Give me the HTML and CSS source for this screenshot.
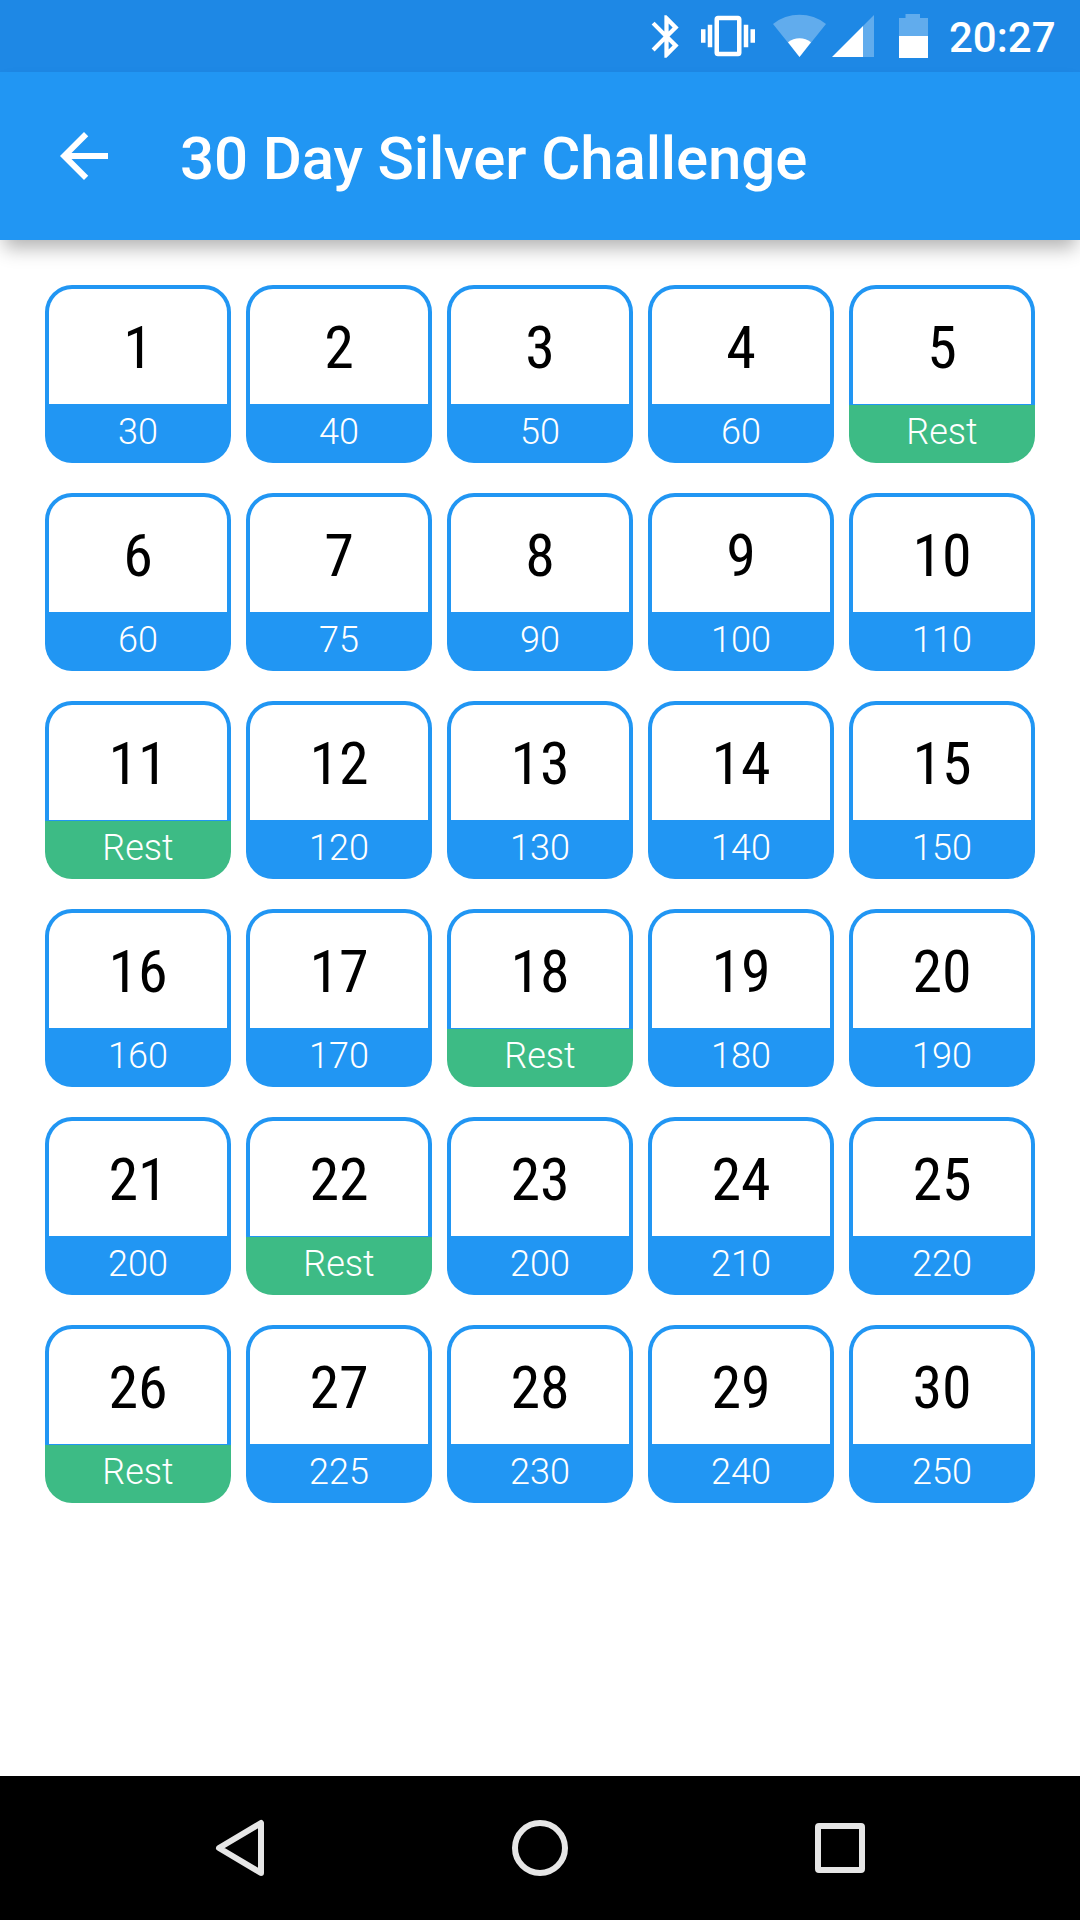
FILE: index.html
```html
<!DOCTYPE html>
<html lang="en">
<head>
    <meta charset="UTF-8">
    <meta name="viewport" content="width=device-width, initial-scale=1.0">
    <title>30 Day Silver Challenge</title>
    <link rel="stylesheet" href="styles.css">
</head>
<body>
    <div class="status-bar">
        <svg class="icon-bluetooth" viewBox="0 0 24 24"><path d="M17.71 7.71L12 2h-1v7.59L6.41 5 5 6.41 10.59 12 5 17.59 6.41 19 11 14.41V22h1l5.71-5.71-4.3-4.29 4.3-4.29zM13 5.83l1.88 1.88L13 9.59V5.83zm1.88 10.46L13 18.17v-3.76l1.88 1.88z"/></svg>
        <svg class="icon-vibrate" viewBox="0 0 24 24"><path d="M0 15h2V9H0v6zm3 2h2V7H3v10zm19-8v6h2V9h-2zm-3 8h2V7h-2v10zM16.5 3h-9C6.67 3 6 3.67 6 4.5v15c0 .83.67 1.5 1.5 1.5h9c.83 0 1.5-.67 1.5-1.5v-15c0-.83-.67-1.5-1.5-1.5zM16 19H8V5h8v14z"/></svg>
        <svg class="icon-wifi" viewBox="0 0 53 44">
            <path class="dim" d="M26.5 43L0 10A42.5 42.5 0 0 1 53 10z"/>
            <path d="M26.5 43L15 28.2A19 19 0 0 1 38 28.2z"/>
        </svg>
        <svg class="icon-signal" viewBox="0 0 42 44">
            <path class="dim" d="M31 12L42 1v42H31z"/>
            <path d="M0 43L31 12v31z"/>
        </svg>
        <svg class="icon-battery" viewBox="0 0 29 44">
            <path class="dim" d="M0 4h6.500V0h14.500v4H29v18H0z"/>
            <path d="M0 22h29v22H0z"/>
        </svg>
        <span class="clock">20:27</span>
    </div>

    <div class="toolbar">
        <svg class="icon-back" viewBox="0 0 24 24"><path d="M20 11H7.830l5.590-5.590L12 4l-8 8 8 8 1.410-1.410L7.830 13H20v-2z"/></svg>
        <h1>30 Day Silver Challenge</h1>
    </div>

    <div class="days" id="days"></div>

    <div class="nav-bar">
        <svg viewBox="0 0 60 60"><path d="M51 5v50L9 30z"/></svg>
        <svg viewBox="0 0 60 60"><circle cx="30" cy="30" r="25"/></svg>
        <svg viewBox="0 0 60 60"><rect x="8" y="8" width="44" height="44" rx="1"/></svg>
    </div>

    <script>
        // Reps for each day, 0 is a rest day
        const reps = [
            30, 40, 50, 60, 0,
            60, 75, 90, 100, 110,
            0, 120, 130, 140, 150,
            160, 170, 0, 180, 190,
            200, 0, 200, 210, 220,
            0, 225, 230, 240, 250
        ];

        const days = document.getElementById('days');

        reps.forEach((count, i) => {
            const day = document.createElement('div');
            day.className = count ? 'day' : 'day rest';
            day.innerHTML = `
                <div class="day-number">${i + 1}</div>
                <div class="day-reps">${count || 'Rest'}</div>
            `;
            days.appendChild(day);
        });
    </script>
</body>
</html>
```

FILE: styles.css
```css
body {
    font-family: Roboto, sans-serif;
    background: white;
    margin: 0;
    height: 1920px;
    display: flex;
    flex-direction: column;
    overflow: hidden;
}

svg {
    display: block;
    flex: none;
    fill: white;
}

.status-bar {
    height: 72px;
    box-sizing: border-box;
    padding-right: 24px;
    background: #1e88e5;
    display: flex;
    justify-content: flex-end;
    align-items: center;
}

.dim {
    fill-opacity: 0.3;
}

.icon-bluetooth {
    width: 51px;
    height: 51px;
}

.icon-vibrate {
    width: 54px;
    height: 54px;
    margin-left: 9px;
}

.icon-wifi {
    width: 53px;
    height: 44px;
    margin-left: 18px;
}

.icon-signal {
    width: 42px;
    height: 44px;
    margin-left: 6px;
}

.icon-battery {
    width: 29px;
    height: 44px;
    margin-left: 25px;
}

.clock {
    width: 107px;
    margin-left: 21px;
    padding-top: 3px;
    color: white;
    font-size: 42px;
    font-weight: 500;
    line-height: 69px;
}

.toolbar {
    height: 168px;
    box-sizing: border-box;
    padding: 0 48px;
    background: #2196f3;
    box-shadow: 0 12px 18px -4px rgba(0,0,0,0.3);
    display: flex;
    align-items: center;
}

.icon-back {
    width: 72px;
    height: 72px;
}

h1 {
    margin: 5px 0 0 60px;
    color: white;
    font-size: 60px;
    font-weight: 500;
    letter-spacing: -0.13px;
    line-height: 70px;
    white-space: nowrap;
}

.days {
    flex: 1;
    padding: 45px;
    display: grid;
    grid-template-columns: repeat(5, 186px);
    grid-auto-rows: 178px;
    gap: 30px 15px;
}

.day {
    display: flex;
    flex-direction: column;
    text-align: center;
}

.day-number {
    height: 119px;
    box-sizing: border-box;
    border: 4px solid #2196f3;
    border-bottom: none;
    border-radius: 27px 27px 0 0;
    color: black;
    font-family: "Roboto Condensed", Roboto, sans-serif;
    font-size: 60px;
    font-stretch: 75%;
    line-height: 118px;
}

.day-reps {
    height: 59px;
    background: #2196f3;
    border-radius: 0 0 27px 27px;
    color: white;
    font-size: 36px;
    font-weight: 300;
    line-height: 57px;
}

.rest .day-number {
    height: 120px;
    border-bottom: 1px solid #2196f3;
}

.rest .day-reps {
    height: 58px;
    background: #3dbb85;
    line-height: 55px;
}

.nav-bar {
    height: 144px;
    background: black;
    display: flex;
    justify-content: center;
    align-items: center;
    gap: 240px;
}

.nav-bar svg {
    width: 60px;
    height: 60px;
    fill: none;
    stroke: #e6e6e6;
    stroke-width: 6;
    stroke-linejoin: round;
}
```
